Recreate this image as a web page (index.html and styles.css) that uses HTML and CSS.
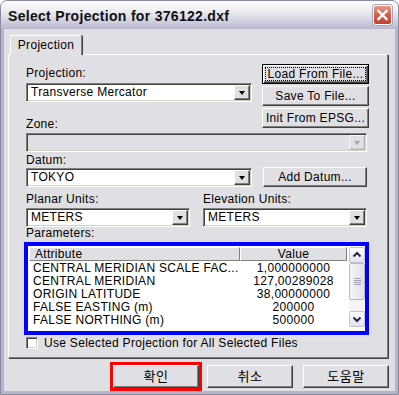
FILE: index.html
```html
<!DOCTYPE html>
<html lang="ko">
<head>
  <meta charset="UTF-8" />
  <title>Select Projection</title>
  <link rel="stylesheet" href="styles.css">
</head>
<body>
  <div class="window">
    <div class="titlebar">
      <span class="title">Select Projection for 376122.dxf</span>
      <span class="close">
        <svg width="19" height="20" viewBox="0 0 19 20">
          <path d="M5.5 6 L13.5 14 M13.5 6 L5.5 14" stroke="#fff" stroke-width="2.4" stroke-linecap="square"/>
        </svg>
      </span>
    </div>

    <div class="client">
      <div class="tabs">
        <div class="tab">Projection</div>
      </div>

      <div class="panel">
        <div class="top">
          <div class="top-left">
            <div class="lbl lbl-proj">Projection:</div>
            <div class="combo"><span class="val">Transverse Mercator</span><span class="drop"><i></i></span></div>
            <div class="lbl lbl-zone">Zone:</div>
          </div>
          <div class="top-right">
            <button class="btn focus"><span>Load From File...</span></button>
            <button class="btn">Save To File...</button>
            <button class="btn">Init From EPSG...</button>
          </div>
        </div>

        <div class="combo zone disabled"><span class="val"></span><span class="drop"><i></i></span></div>

        <div class="datum-row">
          <div class="datum-left">
            <div class="lbl lbl-datum">Datum:</div>
            <div class="combo"><span class="val">TOKYO</span><span class="drop"><i></i></span></div>
          </div>
          <button class="btn add-datum">Add Datum...</button>
        </div>

        <div class="units">
          <div class="unit-col">
            <div class="lbl lbl-unit">Planar Units:</div>
            <div class="combo"><span class="val">METERS</span><span class="drop"><i></i></span></div>
          </div>
          <div class="unit-col">
            <div class="lbl lbl-unit">Elevation Units:</div>
            <div class="combo"><span class="val">METERS</span><span class="drop"><i></i></span></div>
          </div>
        </div>

        <div class="lbl lbl-params">Parameters:</div>

        <div class="params">
          <div class="list">
            <div class="head">
              <div class="h-attr">Attribute</div>
              <div class="h-val">Value</div>
            </div>
            <div class="row"><span class="c-attr">CENTRAL MERIDIAN SCALE FAC...</span><span class="c-val">1,000000000</span></div>
            <div class="row"><span class="c-attr">CENTRAL MERIDIAN</span><span class="c-val">127,00289028</span></div>
            <div class="row"><span class="c-attr">ORIGIN LATITUDE</span><span class="c-val">38,00000000</span></div>
            <div class="row"><span class="c-attr">FALSE EASTING (m)</span><span class="c-val">200000</span></div>
            <div class="row"><span class="c-attr">FALSE NORTHING (m)</span><span class="c-val">500000</span></div>
          </div>
          <div class="scroll">
            <div class="sb-btn">
              <svg width="14" height="14" viewBox="0 0 14 14"><path d="M3.5 8.5 L7 5 L10.5 8.5" fill="none" stroke="#1d2a4a" stroke-width="2"/></svg>
            </div>
            <div class="sb-thumb"><i></i><i></i><i></i><i></i></div>
            <div class="sb-track"></div>
            <div class="sb-btn">
              <svg width="14" height="14" viewBox="0 0 14 14"><path d="M3.5 5.5 L7 9 L10.5 5.5" fill="none" stroke="#1d2a4a" stroke-width="2"/></svg>
            </div>
          </div>
        </div>

        <div class="check">
          <span class="box"></span>
          <span>Use Selected Projection for All Selected Files</span>
        </div>
      </div>

      <div class="footer">
        <div class="ok-wrap"><button class="btn fbtn">확인</button></div>
        <button class="btn fbtn cancel">취소</button>
        <button class="btn fbtn help">도움말</button>
      </div>
    </div>
  </div>
</body>
</html>
```

FILE: styles.css
```css
* {
  box-sizing: border-box;
}

body {
  margin: 0;
  background: #fff;
  font-family: "Liberation Sans", "Noto Sans CJK KR", sans-serif;
  font-size: 12px;
  letter-spacing: 0.3px;
  color: #000;
}

.window {
  width: 399px;
  height: 395px;
  background: #b6b5ca;
  border: 1px solid #8b8aa3;
  border-radius: 7px 7px 0 0;
  padding: 0 3px 3px;
  display: flex;
  flex-direction: column;
}

.titlebar {
  margin: 0 -3px;
  height: 28px;
  padding: 0 6px 0 7px;
  display: flex;
  align-items: center;
  justify-content: space-between;
  border-radius: 6px 6px 0 0;
  background: linear-gradient(#ffffff 0%, #f3f3f7 25%, #dcdbe6 60%, #c2c1d4 90%, #b6b5ca 100%);
}

.title {
  font-weight: 700;
  font-size: 14px;
  letter-spacing: 0.3px;
  color: #111;
  padding-top: 1px;
}

.close {
  width: 19px;
  height: 20px;
  border: 1px solid #fff;
  border-radius: 3px;
  background: linear-gradient(#e79a88, #d05a45 55%, #c0432f);
  box-shadow: 0 0 0 1px #a6a5bb;
  display: flex;
}

.close svg {
  margin: -1px;
}

.client {
  background: #e0dfe3;
  height: 362px;
  display: flex;
  flex-direction: column;
}

.tabs {
  padding: 6px 0 0 6px;
  display: flex;
}

.tab {
  width: 72px;
  height: 20px;
  margin-bottom: -1px;
  position: relative;
  z-index: 1;
  background: #e0dfe3;
  border: 1px solid #fff;
  border-right-color: #808080;
  border-bottom: none;
  border-radius: 0 2px 0 0;
  box-shadow: 1px 0 0 #404040;
  text-align: center;
  line-height: 16px;
  padding-top: 1px;
}

.panel {
  margin-left: 4px;
  width: 380px;
  height: 304px;
  border: 1px solid;
  border-color: #fff #808080 #808080 #fff;
  box-shadow: 1px 1px 0 #404040;
  padding: 9px 0 0 17px;
}

.lbl {
  line-height: 14px;
  white-space: nowrap;
}

.lbl-proj {
  height: 19px;
  padding-top: 2px;
}

.lbl-zone {
  height: 31px;
  padding-top: 15px;
}

.lbl-datum {
  height: 16px;
  padding-top: 1px;
}

.lbl-unit {
  height: 20px;
  padding-top: 5px;
}

.lbl-params {
  height: 15px;
  line-height: 13px;
  padding-top: 0;
}

.top {
  display: flex;
}

.top-left {
  width: 226px;
}

.top-right {
  margin-left: 10px;
  width: 107px;
  display: flex;
  flex-direction: column;
  gap: 2px;
}

.combo {
  height: 19px;
  background: #fff;
  border: 1px solid;
  border-color: #808080 #fff #fff #808080;
  box-shadow: inset 1px 1px 0 #404040, inset -1px -1px 0 #d4d0c8;
  padding: 1px;
  display: flex;
}

.combo .val {
  flex: 1;
  padding-left: 3px;
  line-height: 15px;
  white-space: nowrap;
}

.combo .drop {
  width: 16px;
  height: 15px;
  background: #e0dfe3;
  border: 1px solid;
  border-color: #fff #404040 #404040 #fff;
  box-shadow: inset -1px -1px 0 #808080;
  display: flex;
  align-items: center;
  justify-content: center;
}

.combo .drop i {
  width: 1px;
  height: 0;
  border-top: 4px solid #000;
  border-left: 3px solid transparent;
  border-right: 3px solid transparent;
  margin-top: 1px;
}

.combo.zone {
  width: 341px;
}

.combo.disabled {
  background: #e0dfe3;
}

.combo.disabled .drop {
  border-color: #f4f4f6 #b6b6bd #b6b6bd #f4f4f6;
  box-shadow: inset -1px -1px 0 #cfced6;
}

.combo.disabled .drop i {
  border-top-color: #a6a5ad;
}

.btn {
  font: inherit;
  letter-spacing: inherit;
  color: #000;
  height: 20px;
  padding: 0;
  background: #e0dfe3;
  border: 1px solid;
  border-color: #fff #404040 #404040 #fff;
  box-shadow: inset -1px -1px 0 #808080;
  white-space: nowrap;
}

.btn.focus {
  border-color: #000;
  box-shadow: inset 1px 1px 0 #fff, inset -1px -1px 0 #404040, inset -2px -2px 0 #808080;
  padding: 2px;
  display: flex;
}

.btn.focus span {
  flex: 1;
  border: 1px dotted #000;
  line-height: 12px;
}

.datum-row {
  display: flex;
  align-items: flex-end;
}

.datum-left {
  width: 226px;
}

.add-datum {
  margin-left: 11px;
  width: 104px;
}

.units {
  display: flex;
  gap: 13px;
}

.unit-col {
  width: 164px;
}

.unit-col .combo {
  margin-top: 1px;
}

.params {
  margin-left: -2px;
  width: 345px;
  height: 93px;
  border: 4px solid #0000ff;
  background: #fff;
  padding: 1px 0 4px 1px;
  display: flex;
}

.list {
  width: 318px;
}

.head {
  display: flex;
  height: 14px;
  margin-bottom: 1px;
}

.head div {
  background: #e0dfe3;
  border: 1px solid;
  border-color: #fff #808080 #808080 #fff;
  line-height: 12px;
}

.h-attr {
  width: 211px;
  padding-left: 5px;
}

.h-val {
  width: 107px;
  text-align: center;
}

.row {
  display: flex;
  height: 13px;
  line-height: 13px;
  white-space: nowrap;
}

.c-attr {
  width: 211px;
  padding-left: 4px;
  overflow: hidden;
}

.c-val {
  width: 107px;
  text-align: center;
}

.scroll {
  width: 16px;
  height: 80px;
  margin-left: 2px;
  display: flex;
  flex-direction: column;
  background: #f4f4f6;
}

.sb-btn {
  height: 16px;
  border: 1px solid #c3c3d3;
  border-radius: 2px;
  background: linear-gradient(#fdfdfe, #e3e2ec);
  display: flex;
  align-items: center;
  justify-content: center;
}

.sb-thumb {
  height: 37px;
  border: 1px solid #b9b8cb;
  border-radius: 2px;
  background: linear-gradient(90deg, #f4f4f8, #e2e1ea);
  display: flex;
  flex-direction: column;
  align-items: center;
  justify-content: center;
  gap: 1px;
}

.sb-thumb i {
  width: 7px;
  height: 1px;
  background: #9e9db3;
}

.sb-track {
  flex: 1;
}

.check {
  height: 15px;
  display: flex;
  align-items: center;
  white-space: nowrap;
}

.check .box {
  width: 12px;
  height: 12px;
  background: #fff;
  border: 1px solid;
  border-color: #808080 #fff #fff #808080;
  box-shadow: inset 1px 1px 0 #404040, inset -1px -1px 0 #d4d0c8;
  margin-right: 6px;
}

.footer {
  margin-top: 4px;
  height: 29px;
  padding-right: 6px;
  display: flex;
  align-items: center;
  justify-content: flex-end;
}

.ok-wrap {
  border: 3px solid #ff0000;
  width: 92px;
  height: 29px;
}

.fbtn {
  width: 86px;
  height: 23px;
  font-family: "Noto Sans CJK KR", "Liberation Sans", sans-serif;
  font-size: 13px;
  letter-spacing: 0.5px;
  line-height: 15px;
  padding-bottom: 2px;
}

.cancel {
  margin-left: 5px;
}

.help {
  margin-left: 10px;
}
```
